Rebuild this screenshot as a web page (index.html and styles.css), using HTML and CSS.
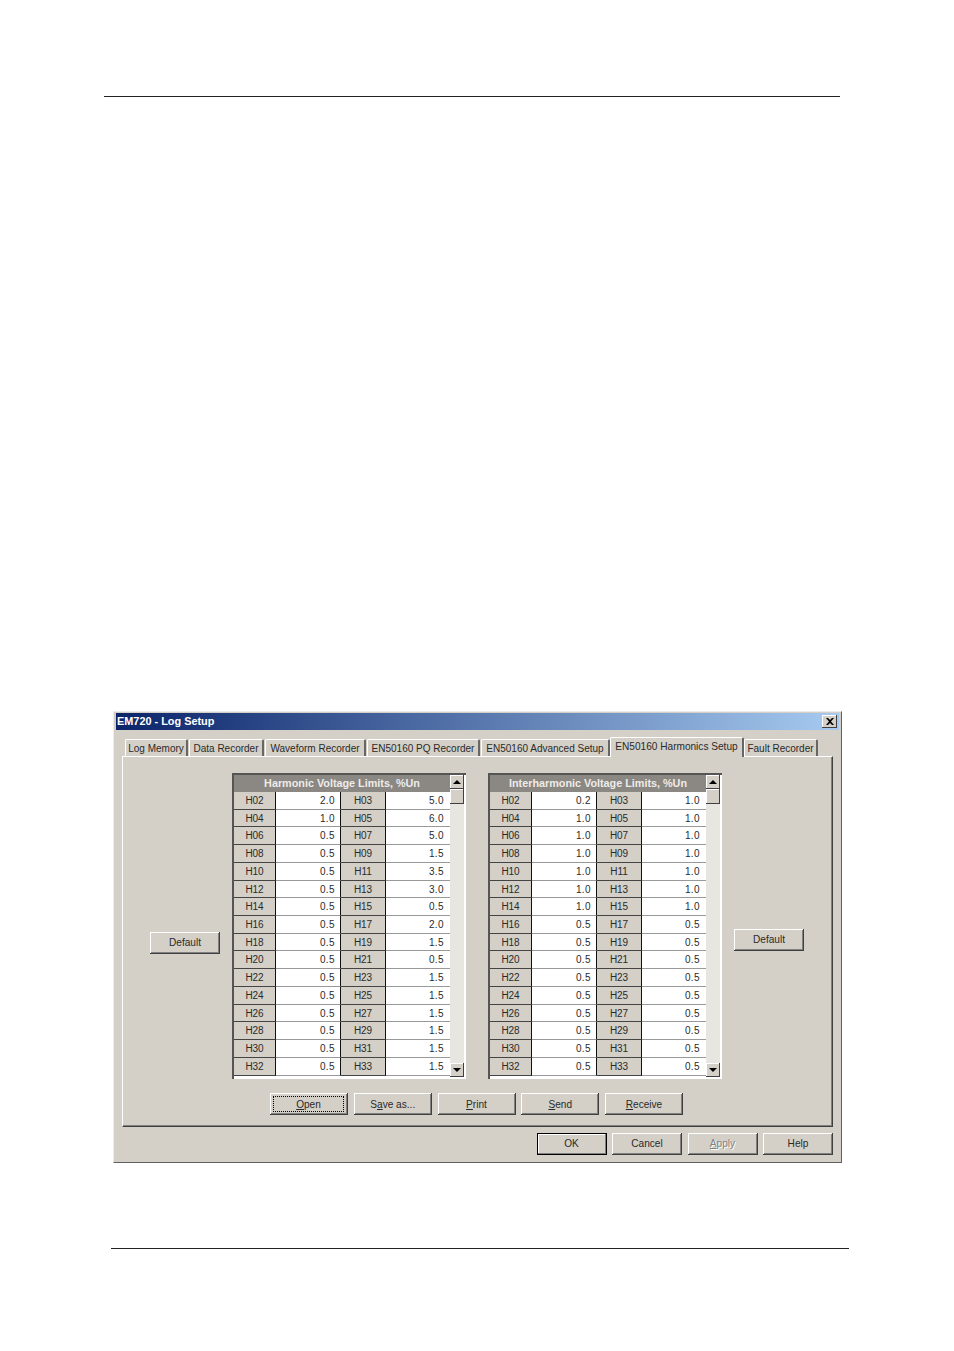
FILE: index.html
```html
<!DOCTYPE html>
<html lang="en">
<head>
    <meta charset="UTF-8">
    <title>EM720 - Log Setup</title>
    <link rel="stylesheet" href="styles.css">
</head>
<body>
    <div class="page">
        <div class="rule rule-top"></div>
        <div class="dialog">
            <div class="titlebar">
                <span>EM720 - Log Setup</span>
                <button type="button" class="close">
                    <svg width="8" height="7" viewBox="0 0 8 7"><path d="M0 0h2l2 2 2-2h2L5 3.500 8 7H6L4 5 2 7H0l3-3.500z" fill="#000"/></svg>
                </button>
            </div>
            <div class="tabs">
                <div class="tab tab-log">Log Memory</div>
                <div class="tab tab-data">Data Recorder</div>
                <div class="tab tab-wave">Waveform Recorder</div>
                <div class="tab tab-pq">EN50160 PQ Recorder</div>
                <div class="tab tab-adv">EN50160 Advanced Setup</div>
                <div class="tab tab-harm active">EN50160 Harmonics Setup</div>
                <div class="tab tab-fault">Fault Recorder</div>
            </div>
            <div class="panel">
                <div class="limits">
                    <button type="button" class="btn default-left">Default</button>
                    <div class="limit-box">
                        <div class="limit-table">
                            <div class="limit-head">Harmonic Voltage Limits, %Un</div>
                            <div class="limit-rows">
                                <span class="h">H02</span><span class="v">2.0</span><span class="h">H03</span><span class="v">5.0</span>
                                <span class="h">H04</span><span class="v">1.0</span><span class="h">H05</span><span class="v">6.0</span>
                                <span class="h">H06</span><span class="v">0.5</span><span class="h">H07</span><span class="v">5.0</span>
                                <span class="h">H08</span><span class="v">0.5</span><span class="h">H09</span><span class="v">1.5</span>
                                <span class="h">H10</span><span class="v">0.5</span><span class="h">H11</span><span class="v">3.5</span>
                                <span class="h">H12</span><span class="v">0.5</span><span class="h">H13</span><span class="v">3.0</span>
                                <span class="h">H14</span><span class="v">0.5</span><span class="h">H15</span><span class="v">0.5</span>
                                <span class="h">H16</span><span class="v">0.5</span><span class="h">H17</span><span class="v">2.0</span>
                                <span class="h">H18</span><span class="v">0.5</span><span class="h">H19</span><span class="v">1.5</span>
                                <span class="h">H20</span><span class="v">0.5</span><span class="h">H21</span><span class="v">0.5</span>
                                <span class="h">H22</span><span class="v">0.5</span><span class="h">H23</span><span class="v">1.5</span>
                                <span class="h">H24</span><span class="v">0.5</span><span class="h">H25</span><span class="v">1.5</span>
                                <span class="h">H26</span><span class="v">0.5</span><span class="h">H27</span><span class="v">1.5</span>
                                <span class="h">H28</span><span class="v">0.5</span><span class="h">H29</span><span class="v">1.5</span>
                                <span class="h">H30</span><span class="v">0.5</span><span class="h">H31</span><span class="v">1.5</span>
                                <span class="h">H32</span><span class="v">0.5</span><span class="h">H33</span><span class="v">1.5</span>
                            </div>
                        </div>
                        <div class="scrollbar">
                            <div class="arrow arrow-up"></div>
                            <div class="thumb"></div>
                            <div class="track"></div>
                            <div class="arrow arrow-down"></div>
                        </div>
                    </div>
                    <div class="limit-box">
                        <div class="limit-table">
                            <div class="limit-head">Interharmonic Voltage Limits, %Un</div>
                            <div class="limit-rows">
                                <span class="h">H02</span><span class="v">0.2</span><span class="h">H03</span><span class="v">1.0</span>
                                <span class="h">H04</span><span class="v">1.0</span><span class="h">H05</span><span class="v">1.0</span>
                                <span class="h">H06</span><span class="v">1.0</span><span class="h">H07</span><span class="v">1.0</span>
                                <span class="h">H08</span><span class="v">1.0</span><span class="h">H09</span><span class="v">1.0</span>
                                <span class="h">H10</span><span class="v">1.0</span><span class="h">H11</span><span class="v">1.0</span>
                                <span class="h">H12</span><span class="v">1.0</span><span class="h">H13</span><span class="v">1.0</span>
                                <span class="h">H14</span><span class="v">1.0</span><span class="h">H15</span><span class="v">1.0</span>
                                <span class="h">H16</span><span class="v">0.5</span><span class="h">H17</span><span class="v">0.5</span>
                                <span class="h">H18</span><span class="v">0.5</span><span class="h">H19</span><span class="v">0.5</span>
                                <span class="h">H20</span><span class="v">0.5</span><span class="h">H21</span><span class="v">0.5</span>
                                <span class="h">H22</span><span class="v">0.5</span><span class="h">H23</span><span class="v">0.5</span>
                                <span class="h">H24</span><span class="v">0.5</span><span class="h">H25</span><span class="v">0.5</span>
                                <span class="h">H26</span><span class="v">0.5</span><span class="h">H27</span><span class="v">0.5</span>
                                <span class="h">H28</span><span class="v">0.5</span><span class="h">H29</span><span class="v">0.5</span>
                                <span class="h">H30</span><span class="v">0.5</span><span class="h">H31</span><span class="v">0.5</span>
                                <span class="h">H32</span><span class="v">0.5</span><span class="h">H33</span><span class="v">0.5</span>
                            </div>
                        </div>
                        <div class="scrollbar">
                            <div class="arrow arrow-up"></div>
                            <div class="thumb"></div>
                            <div class="track"></div>
                            <div class="arrow arrow-down"></div>
                        </div>
                    </div>
                    <button type="button" class="btn default-right">Default</button>
                </div>
                <div class="file-buttons">
                    <button type="button" class="btn focused"><span class="focus-ring"><u>O</u>pen</span></button>
                    <button type="button" class="btn">S<u>a</u>ve as...</button>
                    <button type="button" class="btn"><u>P</u>rint</button>
                    <button type="button" class="btn"><u>S</u>end</button>
                    <button type="button" class="btn"><u>R</u>eceive</button>
                </div>
            </div>
            <div class="footer">
                <button type="button" class="btn primary">OK</button>
                <button type="button" class="btn">Cancel</button>
                <button type="button" class="btn disabled"><u>A</u>pply</button>
                <button type="button" class="btn">Help</button>
            </div>
        </div>
        <div class="rule rule-bottom"></div>
    </div>
</body>
</html>
```

FILE: styles.css
```css
body {
    margin: 0;
    padding: 0;
    background: #fff;
    color: #2a2a2a;
    font-family: "Liberation Sans", Arial, sans-serif;
    font-size: 10px;
}
.page {
    height: 1351px;
    padding-top: 96px;
    box-sizing: border-box;
    overflow: hidden;
}
.rule {
    height: 1px;
    background: #222;
}
.rule-top {
    width: 736px;
    margin-left: 104px;
}
.rule-bottom {
    width: 738px;
    margin-left: 111px;
    margin-top: 85px;
}
.dialog {
    width: 729px;
    height: 452px;
    margin: 614px 0 0 113px;
    padding: 1px 2px;
    box-sizing: border-box;
    background: #d4d0c8;
    border: 1px solid;
    border-color: #eeece8 #606060 #606060 #eeece8;
}
.titlebar {
    height: 17px;
    padding: 0 2px 1px 1px;
    box-sizing: border-box;
    display: flex;
    align-items: center;
    justify-content: space-between;
    color: #fff;
    font-size: 10.9px;
    font-weight: 700;
    background: linear-gradient(to right, #0a246a, #a6caf0);
}
.close {
    width: 15px;
    height: 13px;
    padding: 0;
    display: flex;
    align-items: center;
    justify-content: center;
    background: #d4d0c8;
    border: none;
    box-shadow: inset -1px -1px 0 #404040, inset 1px 1px 0 #fff;
}
.tabs {
    height: 19px;
    margin-top: 7px;
    padding-left: 9px;
    display: flex;
    align-items: flex-end;
}
.tab {
    height: 17px;
    line-height: 17px;
    box-sizing: border-box;
    text-align: center;
    white-space: nowrap;
    margin-right: 1px;
    border-top: 1px solid #fff;
    border-left: 1px solid #fff;
    border-right: 2px solid #666;
    border-radius: 2px 2px 0 0;
}
.tab-log { width: 63px; }
.tab-data { width: 75px; }
.tab-wave { width: 101px; }
.tab-pq { width: 113px; }
.tab-adv { width: 129px; margin-right: 0; }
.tab-harm { width: 134px; margin-right: 0; }
.tab-fault { width: 74px; }
.tab.active {
    height: 20px;
    margin-bottom: -1px;
    line-height: 18px;
    font-size: 10.1px;
    background: #d4d0c8;
    position: relative;
    z-index: 1;
}
.panel {
    width: 711px;
    height: 371px;
    margin-left: 6px;
    padding: 16px 0 0 27px;
    box-sizing: border-box;
    border: 1px solid;
    border-color: #fff #404040 #404040 #fff;
    box-shadow: inset -1px -1px 0 #808080;
}
.limits {
    height: 306px;
    display: flex;
    align-items: flex-start;
}
.btn {
    width: 70px;
    height: 22px;
    padding: 0 0 1px;
    background: #d4d0c8;
    color: #2a2a2a;
    font-family: inherit;
    font-size: 10.1px;
    border: none;
    box-shadow: inset -1px -1px 0 #404040, inset 1px 1px 0 #fff, inset -2px -2px 0 #808080;
}
.default-left {
    margin-top: 159px;
    margin-right: 12px;
}
.default-right {
    margin-top: 156px;
    margin-left: 12px;
}
.limit-box {
    width: 234px;
    height: 306px;
    margin-right: 22px;
    padding: 2px 1px 2px 2px;
    box-sizing: border-box;
    display: flex;
    align-items: flex-start;
    background: #fff;
    box-shadow: inset 2px 2px 0 #555, inset -1px -1px 0 #fff;
}
.limit-box + .default-right {
    margin-left: -10px;
}
.limit-table {
    width: 216px;
    height: 301px;
    overflow: hidden;
}
.limit-head {
    height: 17px;
    line-height: 17px;
    text-align: center;
    color: #eeece8;
    font-size: 10.8px;
    font-weight: 700;
    background: #8b8782;
}
.limit-rows {
    display: grid;
    grid-template-columns: 42px 65px 45px 64px;
    grid-auto-rows: 17.73px;
}
.h, .v {
    box-sizing: border-box;
    line-height: 18px;
}
.h {
    letter-spacing: -0.1px;
    text-align: center;
    background: #d4d0c8;
    border-right: 1px solid #111;
    border-bottom: 1px solid #444;
}
.v {
    text-align: right;
    padding-right: 5px;
    background: #fff;
    border-right: 1px solid #111;
    border-bottom: 1px solid #999;
    letter-spacing: 0.4px;
}
.v:nth-child(4n) {
    border-right: none;
    padding-right: 6px;
}
.scrollbar {
    width: 14px;
    height: 302px;
    display: flex;
    flex-direction: column;
}
.arrow, .thumb {
    background: #d4d0c8;
    box-shadow: inset -1px -1px 0 #404040, inset 1px 1px 0 #fff;
}
.arrow {
    height: 14px;
    flex: none;
    display: flex;
    align-items: center;
    justify-content: center;
}
.arrow::before {
    content: '';
    border-left: 4px solid transparent;
    border-right: 4px solid transparent;
}
.arrow-up::before {
    border-bottom: 4px solid #000;
}
.arrow-down::before {
    border-top: 4px solid #000;
}
.thumb {
    height: 15px;
    flex: none;
}
.track {
    flex: 1;
    background: #e8e6e1;
}
.file-buttons {
    margin: 14px 0 0 120px;
    display: flex;
    gap: 5.75px;
}
.file-buttons .btn {
    width: 78px;
    padding-bottom: 0;
}
.file-buttons .btn.focused {
    padding: 3px 4px 3px 3px;
}
.focus-ring {
    height: 100%;
    display: flex;
    align-items: center;
    justify-content: center;
    box-sizing: border-box;
    border: 1px dotted #000;
}
.footer {
    width: 717px;
    margin-top: 6px;
    display: flex;
    justify-content: flex-end;
    gap: 5.5px;
}
.primary {
    box-shadow: inset 0 0 0 1px #000, inset -2px -2px 0 #808080, inset 2px 2px 0 #fff;
}
.disabled {
    color: #808080;
    text-shadow: 1px 1px 0 #fff;
}
```
